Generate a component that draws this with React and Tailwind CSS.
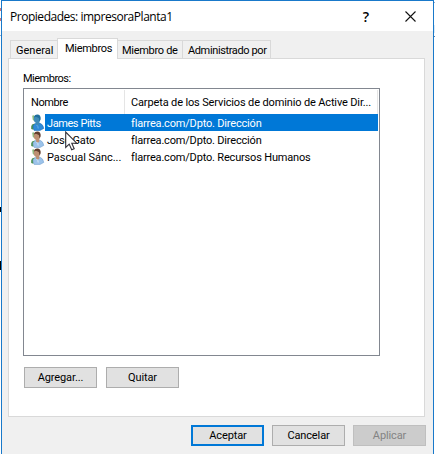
import React from "react";

function Label({ children, className = "" }) {
  return <span className={`block whitespace-pre ${className}`}>{children}</span>;
}

function UserIcon({ selected }) {
  const skin = selected ? "#3f8cb8" : "#bd9073";
  const hair = selected ? "#1f6e9c" : "#5f3c2c";
  const shirt = selected ? "#2f8bd8" : "#9cc3ea";
  const shade = selected ? "#1767b4" : "#6d9acb";
  return (
    <svg className="block h-[17px] w-4 shrink-0" viewBox="0 0 16 17">
      <path d="M2.2 1.8Q3.4.6 4.6 2L4.4 7 2.8 6Z" fill="#8dba7e" />
      <path d="M2 10.5Q.8 12 1.2 15L3.4 15.8 5 9.5Z" fill="#4c9150" />
      <path d="M3 11.6 6 9H9.5Q13.2 10.2 13.8 14.4L10 16.5H4.2Q2.6 14 3 11.6Z" fill={shirt} stroke={shade} strokeWidth=".5" />
      <path d="M6 8H9.2L9.3 10.2 7.8 12 6.2 10.4Z" fill={skin} />
      <ellipse cx="7" cy="5.1" rx="3.2" ry="4.1" fill={skin} />
      <path d="M4 3.4Q4.4.5 7.3.5 11.1.7 10.6 5.2L9.7 7.4 8.8 3.9 6 2.7Z" fill={hair} />
      <path d="M6.6 11 7.8 12.4 8.2 14.5" stroke={selected ? "#74b9e7" : "#e7eff5"} strokeWidth=".8" fill="none" />
    </svg>
  );
}

function Tab({ children, className }) {
  return <div className={`box-border shrink-0 border-[#d9d9d9] ${className}`}>{children}</div>;
}

function Button({ children, className = "border border-[#adadad] bg-[#e1e1e1]" }) {
  return (
    <button className={`flex h-[21px] w-[73px] shrink-0 items-center justify-center tracking-[-0.12px] ${className}`}>
      {children}
    </button>
  );
}

const rows = [
  ["James Pitts", "flarrea.com/Dpto. Dirección", "tracking-[-0.42px]"],
  ["José Gato", "flarrea.com/Dpto. Dirección", "tracking-[-0.2px]"],
  ["Pascual Sánc...", "flarrea.com/Dpto. Recursos Humanos", "tracking-[-0.03px]"],
];

export default function App() {
  return (
    <div className="relative flex h-[454px] w-[435px] overflow-hidden bg-white font-['Roboto',sans-serif] text-[11px] leading-[17px] text-black">
      <div className="flex w-px shrink-0 flex-col bg-white">
        <div className="mt-[8px] h-[3px] bg-[#c77780]" />
        <div className="mt-[7px] h-[3px] bg-[#c77780]" />
        <div className="mt-[14px] h-px bg-[#9aabc5]" />
        <div className="mt-[171px] h-[5px] bg-black" />
        <div className="mt-[49px] h-[9px] bg-black" />
      </div>
      <main className="flex w-[433px] shrink-0 flex-col border-x border-t border-[#1979ca] bg-[#f0f0f0]">
        <header className="flex h-[30px] shrink-0 items-center bg-white pl-[8px]">
          <Label className="w-[350px] font-['Open_Sans',sans-serif] text-[12px] tracking-[-0.47px]">Propiedades: impresoraPlanta1</Label>
          <span className="w-[14px] -translate-x-px text-center font-['Open_Sans',sans-serif] text-[14px] font-semibold">?</span>
          <svg className="ml-[31px] h-[11px] w-[11px]" viewBox="0 0 11 11"><path d="M.5.5l10 10m0-10-10 10" stroke="#111" strokeWidth="1.1" /></svg>
        </header>
        <nav className="flex h-[27px] shrink-0 items-end pl-[8px]">
          <Tab className="h-[18px] w-[47px] border-l border-t pl-[5px] pt-px"><Label>General</Label></Tab>
          <Tab className="relative z-10 -mb-px h-[21px] w-[61px] border-x border-t bg-white pl-[7px] pt-px"><Label className="tracking-[-0.3px]">Miembros</Label></Tab>
          <Tab className="h-[18px] w-[64px] border-t pl-[4px] pt-px"><Label className="tracking-[-0.3px]">Miembro de</Label></Tab>
          <Tab className="h-[18px] w-[89px] border-x border-t pl-[5px] pt-px"><Label className="tracking-[-0.38px]">Administrado por</Label></Tab>
        </nav>
        <section className="ml-[6px] flex h-[359px] w-[417px] shrink-0 flex-col border border-[#d9d9d9] bg-white pl-[14px] pt-[11px]">
          <Label className="tracking-[-0.5px]">Miembros:</Label>
          <div className="mt-[1px] h-[268px] w-[357px] shrink-0 border border-[#828790] bg-white">
            <div className="flex h-[25px] pt-px">
              <div className="flex w-[101px] items-center border-r border-[#e5e5e5] pl-[7px]"><Label className="tracking-[-0.4px]">Nombre</Label></div>
              <div className="flex w-[253px] items-center border-r border-[#e5e5e5] pl-[6px]"><Label className="tracking-[-0.14px]">Carpeta de los Servicios de dominio de Active Dir...</Label></div>
            </div>
            {rows.map(([name, folder, spacing], index) => (
              <div key={name} className="flex h-[17px]">
                <div className="w-[21px] pl-[6px]"><UserIcon selected={index === 0} /></div>
                <div className={`flex w-[333px] ${index === 0 ? "bg-[#0078d7] pt-px text-white" : "pt-px"}`}>
                  <Label className={`w-[86px] pl-[2px] ${spacing}`}>{name}</Label>
                  <Label className="tracking-[-0.18px]">{folder}</Label>
                </div>
              </div>
            ))}
          </div>
          <div className="mt-[11px] flex gap-[9px] pl-px">
            <Button><Label>Agregar...</Label></Button>
            <Button><Label>Quitar</Label></Button>
          </div>
        </section>
        <footer className="mt-[8px] flex shrink-0 gap-[8px] pl-[189px]">
          <Button className="border-2 border-[#0078d7] bg-[#e1e1e1] pl-px"><Label>Aceptar</Label></Button>
          <Button><Label>Cancelar</Label></Button>
          <Button className="border border-[#bfbfbf] bg-[#cccccc] text-[#838383]"><Label>Aplicar</Label></Button>
        </footer>
      </main>
      <div className="flex w-px shrink-0 flex-col bg-white">
        <div className="mt-[2px] h-px bg-[#9aabc5]" />
        <div className="mt-[22px] h-[8px] bg-[#dceaf6]" />
        <div className="mt-[3px] h-px bg-[#5f7fa5]" />
      </div>
      <svg className="absolute left-[65px] top-[131px] h-[20px] w-[13px]" viewBox="0 0 13 20"><path d="M.7 1v15.4l3.5-3.3 2.5 5.7 2.5-1.1-2.4-5.5h5Z" fill="white" stroke="#303039" strokeWidth="1.1" /></svg>
    </div>
  );
}
